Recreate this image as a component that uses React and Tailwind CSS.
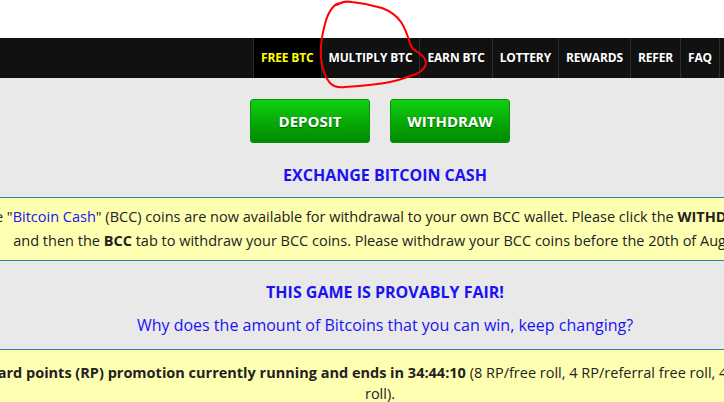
import React from 'react';

const navItems = [
  { label: 'FREE BTC', active: true },
  { label: 'MULTIPLY BTC' },
  { label: 'EARN BTC' },
  { label: 'LOTTERY' },
  { label: 'REWARDS' },
  { label: 'REFER' },
  { label: 'FAQ' },
  { label: 'STATS' },
];

const GreenButton = ({ children }) => (
  <button className="w-[120px] h-[44px] rounded-[3px] border border-[#0a8f0a] bg-gradient-to-b from-[#12cf12] to-[#008a00] text-white font-bold text-[15px] [text-shadow:0_1px_1px_rgba(0,0,0,0.45)]">
    {children}
  </button>
);

// red marker scribble around the MULTIPLY BTC tab
const Scribble = () => (
  <svg className="absolute left-0 top-0 pointer-events-none" width="724" height="100" viewBox="0 0 724 100">
    <path
      d="M337 5 C 341 2, 346 1, 352 2 C 362 3, 372 5, 382 8 C 390 11, 396 15, 401 22 C 405 28, 407 34, 409 40 C 410 45, 412 49, 416 51 C 421 54, 425 57, 426 62 C 426 67, 423 71, 416 74 C 408 77, 400 80, 390 82 C 375 85, 360 86, 345 87 C 338 88, 333 86, 330 83 C 325 77, 322 68, 321 58 C 320 48, 322 35, 325 24 C 327 16, 330 10, 334 6 C 336 4, 339 3, 342 3"
      fill="none"
      stroke="#ff0000"
      strokeWidth="2"
      strokeLinecap="round"
      strokeLinejoin="round"
    />
  </svg>
);

export default function App() {
  return (
    <div className="relative w-[724px] h-[402px] overflow-hidden bg-[#e9e9e9] font-['Open_Sans',sans-serif]">
      {/* top white strip */}
      <div className="h-[38px] bg-white" />

      {/* nav bar */}
      <div className="h-[40px] bg-[#111] flex">
        <ul className="flex ml-[253px] shrink-0">
          {navItems.map((item) => (
            <li
              key={item.label}
              className={`h-[40px] flex items-center px-[7px] border-l border-[#2c2c2c] text-[12px] font-bold tracking-[-0.15px] whitespace-nowrap [text-shadow:1px_1px_0_rgba(0,0,0,0.6)] ${
                item.active ? 'bg-black text-[#ffff00]' : 'text-white'
              }`}
            >
              {item.label}
            </li>
          ))}
        </ul>
      </div>

      {/* centered page column, wider than the window */}
      <div className="w-[1000px] -ml-[115px] flex flex-col items-center">
        <div className="flex gap-[20px] mt-[21px] mr-[10px]">
          <GreenButton>DEPOSIT</GreenButton>
          <GreenButton>WITHDRAW</GreenButton>
        </div>

        <h2 className="mt-[21px] text-[16px] leading-[22px] font-bold text-[#1a12f5]">EXCHANGE BITCOIN CASH</h2>

        <div className="mt-[11px] w-full mr-[6px] bg-[#ffffb2] border-y border-[#2a86a6] py-[7px] text-[14.5px] leading-[24px] text-[#222] text-center">
          <p className="whitespace-nowrap">
            The "<span className="text-[#1a12f5]">Bitcoin Cash</span>" (BCC) coins are now available for withdrawal to your own BCC wallet. Please click the <b>WITHDRAW</b> tab
          </p>
          <p className="whitespace-nowrap">
            and then the <b>BCC</b> tab to withdraw your BCC coins. Please withdraw your BCC coins before the 20th of August.
          </p>
        </div>

        <h3 className="mt-[20px] text-[16px] leading-[22px] font-bold text-[#1a12f5]">THIS GAME IS PROVABLY FAIR!</h3>
        <p className="mt-[10px] text-[16px] leading-[24px] text-[#1a12f5]">
          Why does the amount of Bitcoins that you can win, keep changing?
        </p>

        <div className="mt-[12px] w-full mr-[10px] bg-[#ffffb2] border-t border-[#2a86a6] pt-[12px] text-[14.5px] leading-[21px] text-[#222] text-center">
          <p className="whitespace-nowrap">
            <b>There is a reward points (RP) promotion currently running and ends in 34:44:10</b> (8 RP/free roll, 4 RP/referral free roll, 4 RP/referral multiply
          </p>
          <p>roll).</p>
        </div>
      </div>

      <Scribble />
    </div>
  );
}
